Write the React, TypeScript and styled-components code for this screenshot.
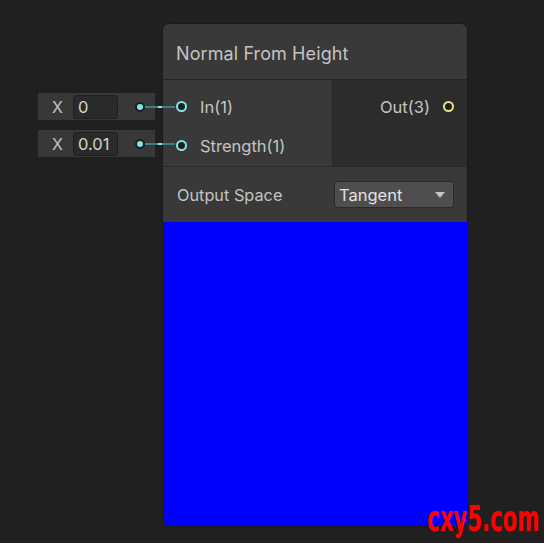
import styled, { createGlobalStyle } from "styled-components";

const GlobalStyle = createGlobalStyle`
  html, body {
    margin: 0;
    padding: 0;
    background: #202020;
  }
  body {
    font-family: Inter, "Noto Sans", sans-serif;
  }
`

const Canvas = styled.div`
  position: relative;
  width: 544px;
  height: 543px;
  background: #202020;
  overflow: hidden;
`

const Node = styled.div`
  position: absolute;
  left: 162px;
  top: 23px;
  width: 304px;
  height: 502px;
  border: 1px solid #1a1a1a;
  border-radius: 7px;
  background: #393939;
  display: flex;
  flex-direction: column;
  overflow: hidden;
`

const Header = styled.div`
  height: 56px;
  box-sizing: border-box;
  display: flex;
  align-items: center;
  padding: 3px 0 0 13px;
  color: #c4c4c4;
  font-size: 18px;
  letter-spacing: 0.1px;
  border-bottom: 1px solid #242424;
  flex-shrink: 0;
`

const Ports = styled.div`
  height: 86px;
  display: flex;
  border-bottom: 1px solid #2a2a2a;
  flex-shrink: 0;
`

const Column = styled.div<{ $side: "in" | "out" }>`
  display: flex;
  flex-direction: column;
  gap: 11px;
  padding-top: 12px;
  box-sizing: border-box;
  ${p => p.$side === "in"
    ? `width: 170px; background: #393939; padding-left: 13px; border-right: 1px solid #282828;`
    : `flex: 1; background: #2c2c2c; padding-right: 13px; align-items: flex-end;`}
`

const PortRow = styled.div`
  height: 26px;
  display: flex;
  align-items: center;
  gap: 13px;
  padding-top: 2px;
  color: #c4c4c4;
  font-size: 16.5px;
`

const PortDot = styled.span<{ $color: string }>`
  width: 11px;
  height: 11px;
  box-sizing: border-box;
  border-radius: 50%;
  border: 2px solid ${p => p.$color};
  background: #1e1e1e;
  flex-shrink: 0;
  margin-top: -2px;
`

const Settings = styled.div`
  height: 55px;
  display: flex;
  align-items: center;
  justify-content: space-between;
  padding: 0 13px 0 14px;
  color: #c4c4c4;
  font-size: 16.3px;
  flex-shrink: 0;
`

const Dropdown = styled.div`
  width: 120px;
  height: 27px;
  box-sizing: border-box;
  border: 1px solid #2a2a2a;
  border-radius: 3px;
  background: #4e4e4e;
  display: flex;
  align-items: center;
  justify-content: space-between;
  padding: 0 8px 0 4px;
  color: #e2e2e2;
  font-size: 16.5px;
`

const Arrow = styled.span`
  width: 0;
  height: 0;
  border-left: 5px solid transparent;
  border-right: 5px solid transparent;
  border-top: 6px solid #c4c4c4;
`

const Preview = styled.div`
  flex: 1;
  background: #0000ff;
`

const Stub = styled.div<{ $top: number }>`
  position: absolute;
  left: 38px;
  top: ${p => p.$top}px;
  height: 27px;
  display: flex;
  align-items: center;
  z-index: 2;
`

const StubBox = styled.div`
  width: 117px;
  height: 27px;
  box-sizing: border-box;
  background: #383838;
  display: flex;
  align-items: center;
  padding-left: 14px;
  color: #c4c4c4;
  font-size: 16px;
  gap: 10px;
`

const Field = styled.div`
  width: 45px;
  height: 24px;
  box-sizing: border-box;
  background: #2a2a2a;
  border: 1px solid #1f1f1f;
  border-radius: 3px;
  display: flex;
  align-items: center;
  padding-left: 4px;
  color: #d4d4d4;
  font-size: 16.5px;
`

const Knob = styled.span`
  position: absolute;
  left: 97px;
  width: 10px;
  height: 10px;
  border-radius: 50%;
  background: #1e1e1e;
  display: flex;
  align-items: center;
  justify-content: center;
  &::after {
    content: "";
    width: 6px;
    height: 6px;
    border-radius: 50%;
    background: #84e4e7;
  }
`

const Wire = styled.span`
  position: absolute;
  left: 107px;
  width: 30px;
  height: 2px;
  background: #3f7f80;
  &::after {
    content: "";
    position: absolute;
    left: 13px;
    width: 4px;
    height: 2px;
    background: #84e4e7;
  }
`

const Watermark = styled.div`
  position: absolute;
  right: 5px;
  bottom: 6px;
  color: #ff0000;
  font-family: "DejaVu Sans", sans-serif;
  font-weight: 700;
  font-size: 36px;
  line-height: 1;
  transform: scaleX(0.59);
  transform-origin: right center;
  z-index: 3;
`

const inputs = [
  { top: 93, value: "0", label: "In(1)" },
  { top: 130, value: "0.01", label: "Strength(1)" },
]

const App = () => {
  return <Canvas>
    <GlobalStyle/>
    <Node>
      <Header>Normal From Height</Header>
      <Ports>
        <Column $side="in">
          {inputs.map(i =>
            <PortRow key={i.label}><PortDot $color="#84e4e7"/>{i.label}</PortRow>)}
        </Column>
        <Column $side="out">
          <PortRow>Out(3)<PortDot $color="#e6e67c"/></PortRow>
        </Column>
      </Ports>
      <Settings>
        Output Space
        <Dropdown>Tangent<Arrow/></Dropdown>
      </Settings>
      <Preview/>
    </Node>
    {inputs.map(i =>
      <Stub key={i.label} $top={i.top}>
        <StubBox>X<Field>{i.value}</Field></StubBox>
        <Knob/>
        <Wire/>
      </Stub>)}
    <Watermark>cxy5.com</Watermark>
  </Canvas>
}

export default App
